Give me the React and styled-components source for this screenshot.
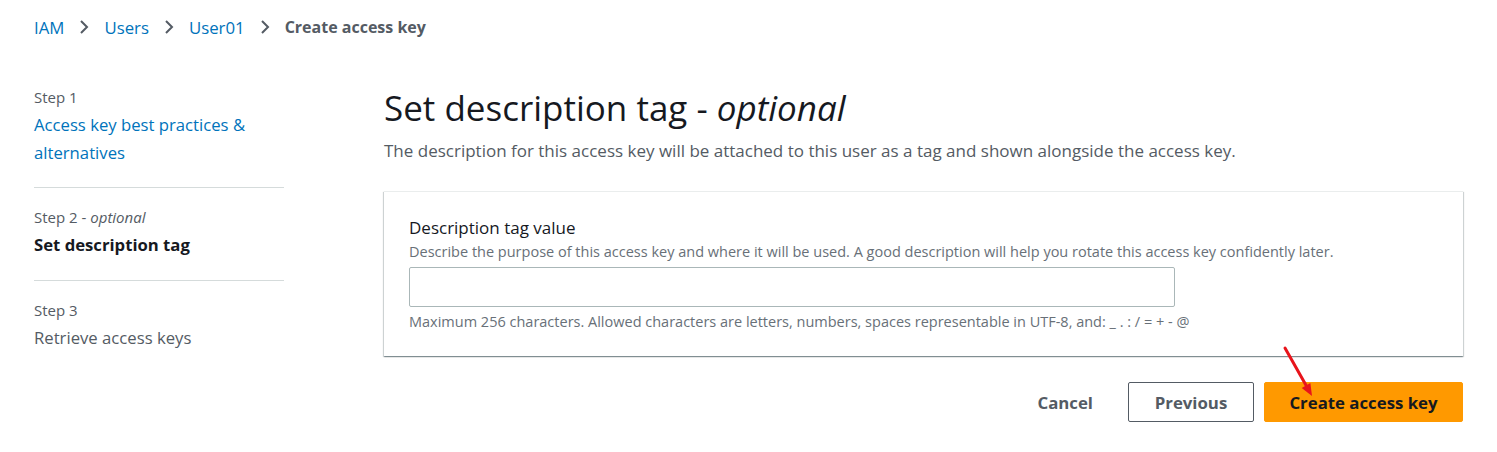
import styled, { createGlobalStyle } from 'styled-components';

const GlobalStyle = createGlobalStyle`
    body {
        margin: 0;
        background: #ffffff;
        font-family: "Open Sans", "Noto Sans", sans-serif;
        color: #16191f;
    }
`

const Page = styled.div`
    position: relative;
    width: 1497px;
    height: 452px;
    padding: 14px 34px 0 34px;
    box-sizing: border-box;
`

const Crumbs = styled.nav`
    display: flex;
    align-items: center;
    gap: 14px;
    height: 26px;
`

const Crumb = styled.a`
    font-size: ${props => props.$current ? '16px' : '16.8px'};
    color: ${props => props.$current ? '#545b64' : '#0073bb'};
    font-weight: ${props => props.$current ? 700 : 400};
    text-decoration: none;
`

const Chevron = () => (
    <svg width="12" height="16" viewBox="0 0 12 16">
        <path d="M3 2 L9 8 L3 14" fill="none" stroke="#545b64" strokeWidth="2" />
    </svg>
)

const Body = styled.div`
    display: flex;
    margin-top: 47px;
`

const Side = styled.aside`
    width: 250px;
    flex-shrink: 0;
`

const StepBlock = styled.div`
    padding: ${props => props.$first ? '0 0 20px 0' : '19px 0 21px 0'};
    border-bottom: ${props => props.$last ? 'none' : '1px solid #d5dbdb'};
`

const StepLabel = styled.div`
    font-size: 15px;
    line-height: 20px;
    color: #545b64;
    em {
        font-style: italic;
    }
`

const StepTitle = styled.div`
    font-size: 16.7px;
    line-height: 28px;
    margin-top: 4px;
    color: ${props => props.$state === 'link' ? '#0073bb' : props.$state === 'active' ? '#16191f' : '#545b64'};
    font-weight: ${props => props.$state === 'active' ? 700 : 400};
`

const Main = styled.main`
    margin-left: 100px;
    flex: 1;
`

const Heading = styled.h1`
    margin: 0;
    font-size: 35px;
    font-weight: 400;
    line-height: 42px;
    color: #16191f;
    em {
        font-style: italic;
    }
`

const Sub = styled.p`
    margin: 10px 0 0 0;
    font-size: 17px;
    line-height: 24px;
    color: #545b64;
`

const Card = styled.section`
    margin-top: 28px;
    width: 1079px;
    box-sizing: border-box;
    padding: 24px 25px 24px 25px;
    border-top: 1px solid #eaeded;
    box-shadow: 0 1px 1px 0 rgba(0, 28, 36, 0.3), 1px 1px 1px 0 rgba(0, 28, 36, 0.15), -1px 1px 1px 0 rgba(0, 28, 36, 0.15);
`

const FieldLabel = styled.label`
    display: block;
    font-size: 17px;
    line-height: 24px;
    color: #16191f;
`

const Hint = styled.div`
    font-size: 14.5px;
    line-height: 20px;
    margin-top: 2px;
    color: #687078;
`

const Input = styled.input`
    display: block;
    width: 766px;
    height: 40px;
    box-sizing: border-box;
    margin: 5px 0 5px 0;
    border: 1px solid #aab7b8;
    border-radius: 2px;
    padding: 4px 10px;
    font-family: inherit;
    font-size: 15px;
`

const Actions = styled.div`
    display: flex;
    justify-content: flex-end;
    align-items: center;
    gap: 10px;
    width: 1079px;
    margin-top: 26px;
`

const Button = styled.button`
    height: 40px;
    box-sizing: border-box;
    padding: 0 24px;
    font-family: inherit;
    font-size: 16.8px;
    font-weight: 700;
    border-radius: 2px;
    cursor: pointer;
    color: ${props => props.$variant === 'primary' ? '#16191f' : '#545b64'};
    background: ${props => props.$variant === 'primary' ? '#ff9900' : '#ffffff'};
    border: 1px solid ${props => props.$variant === 'primary' ? '#ff9900' : props.$variant === 'link' ? 'transparent' : '#545b64'};
    min-width: ${props => props.$variant === 'primary' ? '199px' : props.$variant === 'normal' ? '126px' : '0'};
`

const Arrow = styled.svg`
    position: absolute;
    left: 1280px;
    top: 344px;
`

function App() {
    return (
        <>
            <GlobalStyle />
            <Page>
                <Crumbs>
                    <Crumb href="#">IAM</Crumb>
                    <Chevron />
                    <Crumb href="#">Users</Crumb>
                    <Chevron />
                    <Crumb href="#">User01</Crumb>
                    <Chevron />
                    <Crumb $current>Create access key</Crumb>
                </Crumbs>
                <Body>
                    <Side>
                        <StepBlock $first>
                            <StepLabel>Step 1</StepLabel>
                            <StepTitle $state="link">Access key best practices &amp; alternatives</StepTitle>
                        </StepBlock>
                        <StepBlock>
                            <StepLabel>Step 2 - <em>optional</em></StepLabel>
                            <StepTitle $state="active">Set description tag</StepTitle>
                        </StepBlock>
                        <StepBlock $last>
                            <StepLabel>Step 3</StepLabel>
                            <StepTitle $state="disabled">Retrieve access keys</StepTitle>
                        </StepBlock>
                    </Side>
                    <Main>
                        <Heading>Set description tag - <em>optional</em></Heading>
                        <Sub>The description for this access key will be attached to this user as a tag and shown alongside the access key.</Sub>
                        <Card>
                            <FieldLabel htmlFor="desc">Description tag value</FieldLabel>
                            <Hint>Describe the purpose of this access key and where it will be used. A good description will help you rotate this access key confidently later.</Hint>
                            <Input id="desc" />
                            <Hint>Maximum 256 characters. Allowed characters are letters, numbers, spaces representable in UTF-8, and: _ . : / = + - @</Hint>
                        </Card>
                        <Actions>
                            <Button $variant="link">Cancel</Button>
                            <Button $variant="normal">Previous</Button>
                            <Button $variant="primary">Create access key</Button>
                        </Actions>
                    </Main>
                </Body>
                <Arrow width="40" height="56" viewBox="0 0 40 56">
                    <path d="M5 4 L27 43" stroke="#e8141b" strokeWidth="3" strokeLinecap="round" />
                    <path d="M32 52 L21.7 43.9 L30.4 39 Z" fill="#e8141b" />
                </Arrow>
            </Page>
        </>
    )
}

export default App;
